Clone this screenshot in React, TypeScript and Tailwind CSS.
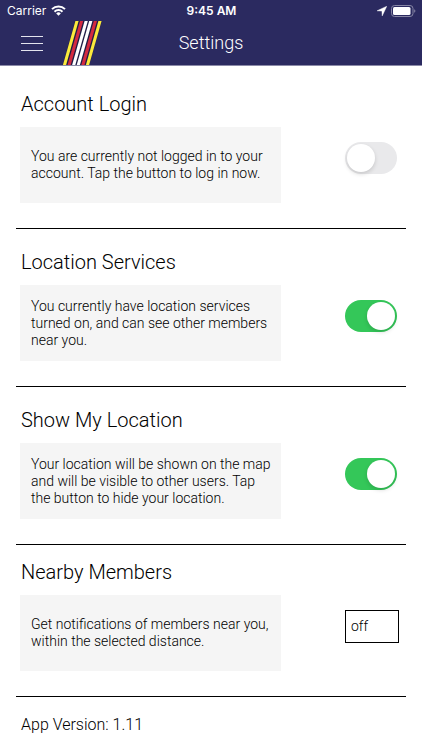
import { useState } from 'react';
import type { ReactNode } from 'react';

const STRIPES = [
  { x: 14, color: '#fbea3c' },
  { x: 18.6, color: '#d42a40' },
  { x: 23.2, color: '#ffffff' },
  { x: 27.8, color: '#ffffff' },
  { x: 32.4, color: '#d42a40' },
  { x: 37, color: '#fbea3c' },
];

const StatusBar = () => (
  <div className="grid h-[21px] grid-cols-[1fr_auto_1fr] items-center pl-[7px] pr-[6px] font-['Inter','Liberation_Sans',sans-serif]">
    <div className="flex items-center gap-[5px]">
      <span className="text-[12px] leading-4">Carrier</span>
      <svg className="h-[11px] w-[15px]" viewBox="0 0 15 11" fill="none" aria-hidden="true">
        <path d="M1 4.1a9.2 9.2 0 0 1 13 0" stroke="white" strokeWidth="2" />
        <path d="M3.5 6.7a5.7 5.7 0 0 1 8 0" stroke="white" strokeWidth="1.9" />
        <path d="M5.2 8.4a3.3 3.3 0 0 1 4.6 0L7.5 10.8z" fill="white" />
      </svg>
    </div>
    <span className="text-[12px] font-semibold leading-4">9:45 AM</span>
    <div className="flex items-center justify-end gap-1">
      <svg className="h-[10px] w-[10px]" viewBox="0 0 10 10" aria-hidden="true">
        <path d="M9.8.2 0 4.8l4.9.3.3 4.9z" fill="white" stroke="white" strokeWidth=".4" />
      </svg>
      <svg className="h-3 w-[25px]" viewBox="0 0 25 12" aria-hidden="true">
        <rect x=".5" y=".5" width="21.5" height="11" rx="3" fill="none" stroke="#8786a5" />
        <rect x="2" y="2" width="17.5" height="8" rx="1.5" fill="white" />
        <path d="M23.2 4.2c1.6.7 1.6 2.9 0 3.6z" fill="#8786a5" />
      </svg>
    </div>
  </div>
);

const Logo = () => (
  <svg className="h-11 w-[38px] overflow-visible" viewBox="0 0 38 44" aria-hidden="true">
    <path d="M12 0H38.8L26.3 44H-.5z" fill="#1f1d45" />
    {STRIPES.map(({ x, color }) => (
      <path key={x} d={`M${x - 1.6} 0h3.2l-12.5 44h-3.2z`} fill={color} />
    ))}
  </svg>
);

const Header = () => (
  <header className="border-b border-[#8b8aa8] bg-[#2b2a60] text-white">
    <StatusBar />
    <div className="grid h-11 grid-cols-[1fr_auto_1fr] items-center pl-[21px] pr-[21px]">
      <div className="flex items-center gap-5">
        <button type="button" aria-label="Menu" className="flex w-[22px] flex-col gap-[6px]">
          <span className="h-px w-full bg-[#e4e4ee]" />
          <span className="h-px w-full bg-[#e4e4ee]" />
          <span className="h-px w-full bg-[#e4e4ee]" />
        </button>
        <Logo />
      </div>
      <h1 className="text-[18px] font-light leading-6">Settings</h1>
    </div>
  </header>
);

interface SectionProps {
  title: string;
  text: string;
  className: string;
  children: ReactNode;
}

const Section = ({ title, text, className, children }: SectionProps) => (
  <section className={`border-b border-black pb-[25px] ${className}`}>
    <h2 className="pl-[5px] text-[20px] font-light leading-6">{title}</h2>
    <div className="mt-[11px] flex items-start gap-16 pl-1 pr-[7px]">
      <div className="flex min-h-[76px] flex-1 items-center bg-[#f5f5f5] pl-[11px] pr-[6px]">
        <p className="text-[14px] font-light leading-[17px]">{text}</p>
      </div>
      <div className="flex w-[54px] shrink-0 pt-[15px]">{children}</div>
    </div>
  </section>
);

interface ToggleProps {
  label: string;
  initial: boolean;
}

const Toggle = ({ label, initial }: ToggleProps) => {
  const [on, setOn] = useState(initial);

  return (
    <input
      type="checkbox"
      role="switch"
      aria-label={label}
      checked={on}
      onChange={(e) => setOn(e.target.checked)}
      className="flex h-8 w-[52px] appearance-none rounded-full bg-[#e9e9eb] p-[2px] before:h-7 before:w-7 before:rounded-full before:bg-white before:shadow-[0_2px_4px_rgba(0,0,0,0.15)] checked:justify-end checked:bg-[#34c759]"
    />
  );
};

export default function App() {
  const [distance, setDistance] = useState('off');

  return (
    <div className="min-h-screen bg-white font-['Roboto','Liberation_Sans',sans-serif] text-black">
      <Header />
      <main className="px-4">
        <Section
          title="Account Login"
          text="You are currently not logged in to your account. Tap the button to log in now."
          className="pt-[26px]"
        >
          <Toggle label="Account Login" initial={false} />
        </Section>
        <Section
          title="Location Services"
          text="You currently have location services turned on, and can see other members near you."
          className="pt-[21px]"
        >
          <Toggle label="Location Services" initial={true} />
        </Section>
        <Section
          title="Show My Location"
          text="Your location will be shown on the map and will be visible to other users. Tap the button to hide your location."
          className="pt-[21px]"
        >
          <Toggle label="Show My Location" initial={true} />
        </Section>
        <Section
          title="Nearby Members"
          text="Get notifications of members near you, within the selected distance."
          className="pt-[15px]"
        >
          <select
            aria-label="Nearby Members distance"
            value={distance}
            onChange={(e) => setDistance(e.target.value)}
            className="h-[33px] w-full appearance-none border border-black bg-white px-[5px] text-[14px] font-light"
          >
            <option value="off">off</option>
            <option value="1">1 mi</option>
            <option value="5">5 mi</option>
            <option value="10">10 mi</option>
          </select>
        </Section>
        <p className="pl-[5px] pt-4 text-[16px] font-light leading-6">App Version: 1.11</p>
      </main>
    </div>
  );
}
